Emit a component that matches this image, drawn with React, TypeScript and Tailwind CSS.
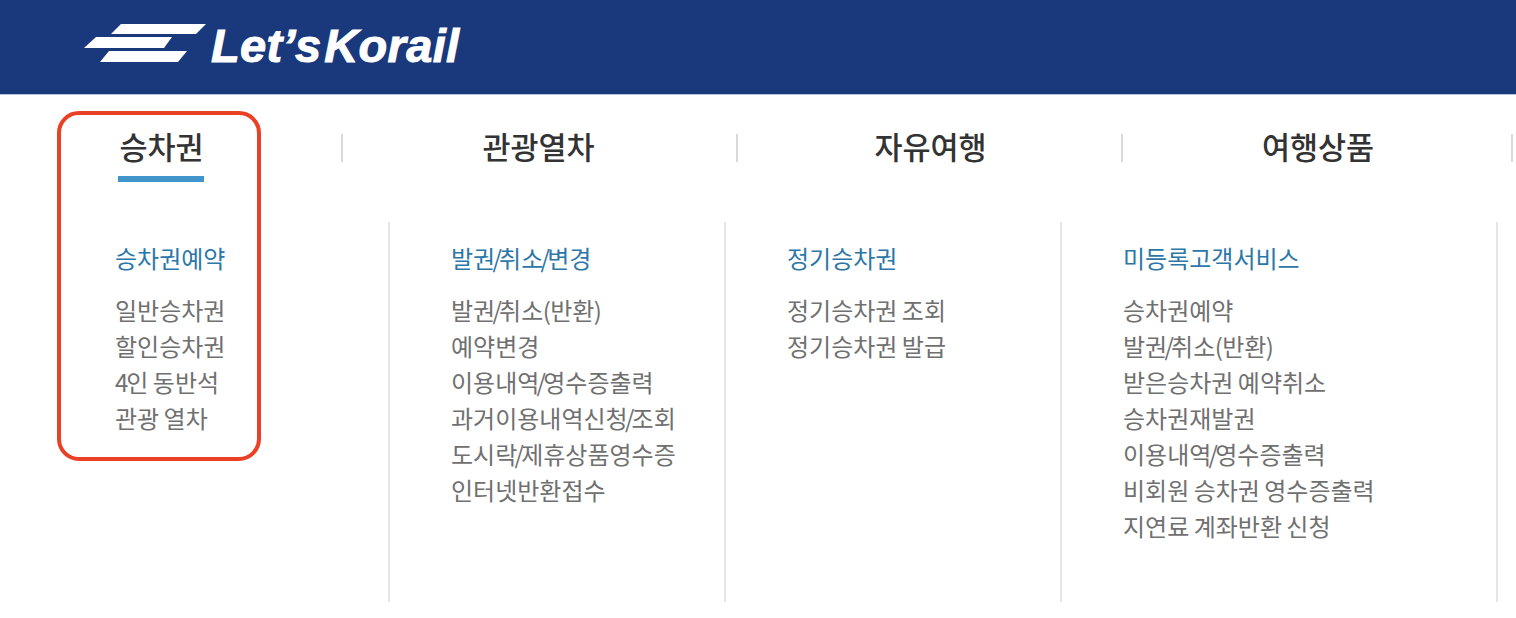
const font = { fontFamily: '"Noto Sans CJK KR", "Noto Sans", sans-serif' };

const tabs = [
  { label: "승차권", width: "w-[343px] pr-[20px]", active: true },
  { label: "관광열차", width: "w-[395px] pr-[4px]" },
  { label: "자유여행", width: "w-[385px]" },
  { label: "여행상품", width: "w-[390px]" },
];

const columns = [
  {
    title: "승차권예약",
    width: "w-[337px] pl-[62px]",
    items: ["일반승차권", "할인승차권", "4인 동반석", "관광 열차"],
  },
  {
    title: "발권/취소/변경",
    width: "w-[336px] pl-[61px]",
    items: ["발권/취소(반환)", "예약변경", "이용내역/영수증출력", "과거이용내역신청/조회", "도시락/제휴상품영수증", "인터넷반환접수"],
  },
  {
    title: "정기승차권",
    width: "w-[336px] pl-[61px]",
    items: ["정기승차권 조회", "정기승차권 발급"],
  },
  {
    title: "미등록고객서비스",
    width: "w-[436px] pl-[61px]",
    items: ["승차권예약", "발권/취소(반환)", "받은승차권 예약취소", "승차권재발권", "이용내역/영수증출력", "비회원 승차권 영수증출력", "지연료 계좌반환 신청"],
  },
];

// the original's punctuation and digits are narrower than this font's
const Label = ({ text }: { text: string }) => (
  <>
    {text.split(/([/()4 ])/).map((part, i) => {
      if (part === "/") return <span key={i} className="mx-[-2.75px]">/</span>;
      if (part === "(" || part === ")") return <span key={i} className="mx-[-0.6px]">{part}</span>;
      if (part === "4") return <span key={i} className="mr-[-2px]">4</span>;
      if (part === " ") return <span key={i} className="mr-[-1px]"> </span>;
      return part;
    })}
  </>
);

export default function App() {
  return (
    <div className="relative w-[1516px] h-[618px] overflow-hidden bg-white" style={font}>
      <header className="h-[95px] bg-[#1a397c] flex items-start pl-[83px] pt-[24px] border-b border-[#b9c4da]">
        <svg width="124" height="38" viewBox="0 0 124 38" className="shrink-0">
          <polygon points="38,0 123,0 113,10 28,10" fill="#fff" />
          <polygon points="13,13 89,13 81,24 1,24" fill="#fff" />
          <polygon points="26,27 104,27 95,38 17,38" fill="#fff" />
        </svg>
        <span
          className="ml-[4px] mt-[-2px] flex text-[47px] leading-[47px] font-bold italic text-white tracking-[0.3px] [-webkit-text-stroke:1px_white]"
          style={{ fontFamily: '"Liberation Sans", sans-serif' }}
        >
          <span>Let’s</span>
          <span className="ml-[3px]">Korail</span>
        </span>
      </header>

      <nav className="flex h-[127px]">
        {tabs.map((tab) => (
          <div key={tab.label} className={`${tab.width} relative flex justify-center`}>
            <div className="flex flex-col items-center">
              <span className="mt-[27px] text-[30.5px] leading-[48px] font-medium text-[#333]">{tab.label}</span>
              {tab.active && <span className="mt-[6px] mr-[2px] w-[86px] h-[6px] bg-[#4095ca]" />}
            </div>
            <span className="absolute right-0 top-[39px] w-[2px] h-[28px] bg-[#d9d9d9]" />
          </div>
        ))}
      </nav>

      <main className="flex pl-[53px]">
        {columns.map((col) => (
          <section key={col.title} className={`${col.width} h-[380px] pt-[18px] border-r-2 border-[#e6e6e6]`}>
            <h3 className="text-[24px] leading-[36px] font-normal text-[#2c77a8]">
              <Label text={col.title} />
            </h3>
            <ul className="mt-[16px]">
              {col.items.map((item) => (
                <li key={item} className="text-[24px] leading-[36px] text-[#707070]">
                  <Label text={item} />
                </li>
              ))}
            </ul>
          </section>
        ))}
      </main>

      <div className="absolute left-[57px] top-[111px] w-[204px] h-[350px] rounded-[22px] border-[4px] border-[#ea4025]" />
    </div>
  );
}
